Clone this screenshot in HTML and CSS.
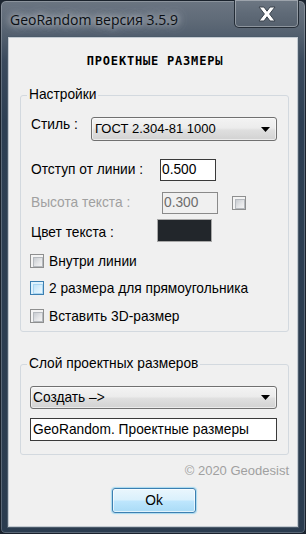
FILE: index.html
```html
<!DOCTYPE html>
<html lang="ru">
<head>
<meta charset="utf-8">
<title>GeoRandom</title>
<link rel="stylesheet" href="styles.css">
</head>
<body>
<div class="window">
  <div class="titlebar">
    <span class="title">GeoRandom версия 3.5.9</span>
    <div class="close">
      <svg width="18" height="16" viewBox="0 0 18 16"><polygon points="1,1 6,1 9,5.2 12,1 17,1 11.6,8 17,15 12,15 9,10.8 6,15 1,15 6.4,8" fill="#fff" stroke="#3a434d" stroke-width="1" stroke-linejoin="round"/></svg>
    </div>
  </div>
  <div class="client">
    <h1 class="heading">ПРОЕКТНЫЕ РАЗМЕРЫ</h1>

    <fieldset class="group g1">
      <legend>Настройки</legend>
      <div class="row r1">
        <span class="lbl w60">Стиль :</span>
        <div class="combo c1"><span>ГОСТ 2.304-81 1000</span><svg width="9" height="5" viewBox="0 0 9 5"><polygon points="0,0 9,0 4.5,5" fill="#000"/></svg></div>
      </div>
      <div class="row r2">
        <span class="lbl w129">Отступ от линии :</span>
        <div class="field small">0.500</div>
      </div>
      <div class="row r3">
        <span class="lbl w131 disabled">Высота текста :</span>
        <div class="field small off">0.300</div>
        <span class="cb cb-off"></span>
      </div>
      <div class="row r4">
        <span class="lbl w126 low">Цвет текста :</span>
        <div class="swatch"></div>
      </div>
      <div class="row check r5"><span class="cb"></span><span>Внутри линии</span></div>
      <div class="row check r6"><span class="cb hot"></span><span>2 размера для прямоугольника</span></div>
      <div class="row check r7"><span class="cb"></span><span>Вставить 3D-размер</span></div>
    </fieldset>

    <fieldset class="group g2">
      <legend>Слой проектных размеров</legend>
      <div class="combo c2"><span>Создать –&gt;</span><svg width="9" height="5" viewBox="0 0 9 5"><polygon points="0,0 9,0 4.5,5" fill="#000"/></svg></div>
      <div class="field wide">GeoRandom. Проектные размеры</div>
    </fieldset>

    <div class="copyright">© 2020 Geodesist</div>
    <div class="actions"><button class="btn" type="button">Ok</button></div>
  </div>
</div>
</body>
</html>
```
FILE: styles.css
```css
* { box-sizing: border-box; }
html, body { margin: 0; padding: 0; }
body {
  width: 306px;
  height: 534px;
  overflow: hidden;
  background: #1c2530;
  font-family: "Liberation Sans", Arial, sans-serif;
  font-size: 13.75px;
  color: #000;
}
.window {
  width: 306px;
  height: 534px;
  display: flex;
  flex-direction: column;
  border: 1px solid #1a222c;
  border-radius: 6px 6px 5px 5px;
  background: linear-gradient(180deg, #6b7581 0px, #606b78 18px, #515e6d 36px, #3a4a5d 60px, #2d3f53 120px, #2b3c4f 100%);
  box-shadow: inset 0 0 0 1px rgba(255,255,255,.22);
}
.titlebar {
  height: 36px;
  display: flex;
  align-items: flex-start;
  padding-left: 9px;
}
.title {
  margin-top: 9px;
  font-family: "Open Sans", "Noto Sans", sans-serif;
  font-size: 14px;
  line-height: 20px;
  color: #0b0f14;
  text-shadow: 0 0 6px rgba(255,255,255,.75), 0 0 12px rgba(255,255,255,.55), 0 0 18px rgba(220,226,232,.45);
}
.close {
  margin-left: auto;
  margin-right: 6px;
  margin-top: -1px;
  width: 65px;
  height: 28px;
  border: 1px solid rgba(25,33,43,.85);
  border-top: 0;
  border-radius: 0 0 5px 5px;
  background: linear-gradient(180deg, #6d7783 0%, #5f6a77 50%, #56616e 100%);
  box-shadow: inset 0 0 0 1px rgba(255,255,255,.33);
  display: flex;
  align-items: center;
  justify-content: center;
}
.client {
  flex: 1;
  margin: 0 7px 6px;
  background: #f0f0f0;
  border: 1px solid #c3cad1;
  box-shadow: 0 0 0 1px #4c5b6a;
  display: flex;
  flex-direction: column;
}
.heading {
  margin: 15px 0 0;
  padding-left: 4px;
  font-family: "DejaVu Sans Mono", monospace;
  font-weight: bold;
  font-size: 12px;
  line-height: 16px;
  letter-spacing: 0.8px;
  text-align: center;
}
.group {
  margin: 18px 8px 0 11px;
  padding: 0 0 5px;
  border: 1px solid #d3d9df;
  border-radius: 3px;
  min-width: 0;
}
.group legend {
  margin-left: 6px;
  padding: 0 2px;
  font-size: 13.75px;
  line-height: 16px;
}
.g2 {
  margin-top: 24px;
  padding-bottom: 13px;
}
.row {
  display: flex;
  align-items: center;
  margin-left: 10px;
}
.lbl { line-height: 16px; flex: none; }
.w60 { width: 60px; }
.w129 { width: 129px; }
.w131 { width: 131px; }
.w126 { width: 126px; }
.disabled { color: #a0a0a0; }
.low { padding-top: 4px; }
.r1 { margin-top: 14px; align-items: flex-start; }
.r2 { margin-top: 18px; height: 22px; }
.r3 { margin-top: 11px; height: 22px; }
.r4 { margin-top: 5px; height: 23px; }
.check { height: 20px; margin-left: 9px; gap: 5px; }
.r5 { margin-top: 9px; }
.r6 { margin-top: 7px; }
.r7 { margin-top: 8px; }

.combo {
  display: flex;
  align-items: center;
  justify-content: space-between;
  border: 1px solid #707070;
  border-radius: 3px;
  background: linear-gradient(180deg, #f3f3f3 0%, #ececec 45%, #dfdfdf 55%, #d2d2d2 100%);
  box-shadow: inset 0 0 0 1px rgba(255,255,255,.55);
  line-height: 16px;
}
.c1 { width: 186px; height: 24px; padding: 0 6px 0 3px; font-size: 13px; }
.c2 { width: 247px; height: 23px; margin: 14px 0 0 9px; padding: 0 6px 0 2px; }

.field {
  background: #fff;
  border: 1px solid #3a3a3a;
  line-height: 16px;
}
.small { width: 56px; height: 22px; padding: 2px 1px 0; }
.off {
  background: #f0f0f0;
  border-color: #8a8a8a;
  color: #6d6d6d;
}
.wide { width: 247px; height: 23px; margin: 9px 0 0 9px; padding: 3px 2px 0; }

.cb {
  flex: none;
  width: 14px;
  height: 14px;
  border: 1px solid #8e8f8f;
  background: #f4f4f4;
  padding: 2px;
}
.cb::after {
  content: "";
  display: block;
  width: 100%;
  height: 100%;
  border: 1px solid #b5b9be;
  background: linear-gradient(135deg, #c8ccd1 0%, #e6e7e9 60%, #f3f3f3 100%);
}
.cb-off { margin-left: 14px; }
.cb.hot { border-color: #3c7fb1; background: #def2fd; }
.cb.hot::after {
  border-color: #a9d6f2;
  background: linear-gradient(135deg, #c2e4f8 0%, #dcf0fc 60%, #eaf7fe 100%);
}
.swatch {
  width: 55px;
  height: 23px;
  background: #22262b;
  border: 1px solid #a8a8a8;
}
.copyright {
  margin: 8px 8px 0 0;
  text-align: right;
  color: #a0a0a0;
  font-size: 13px;
  line-height: 16px;
}
.actions {
  display: flex;
  justify-content: center;
  padding-left: 2px;
  margin-top: 9px;
}
.btn {
  width: 84px;
  height: 25px;
  padding: 0;
  border: 1px solid #3c7fb1;
  border-radius: 3px;
  background: linear-gradient(180deg, #eaf6fd 0%, #d9f0fc 48%, #bee6fd 52%, #a9dbf6 100%);
  box-shadow: inset 0 0 0 1px rgba(255,255,255,.65), 0 0 1px 1px rgba(110,200,240,.55);
  font-family: "Liberation Sans", Arial, sans-serif;
  font-size: 13.75px;
  color: #000;
}
```
